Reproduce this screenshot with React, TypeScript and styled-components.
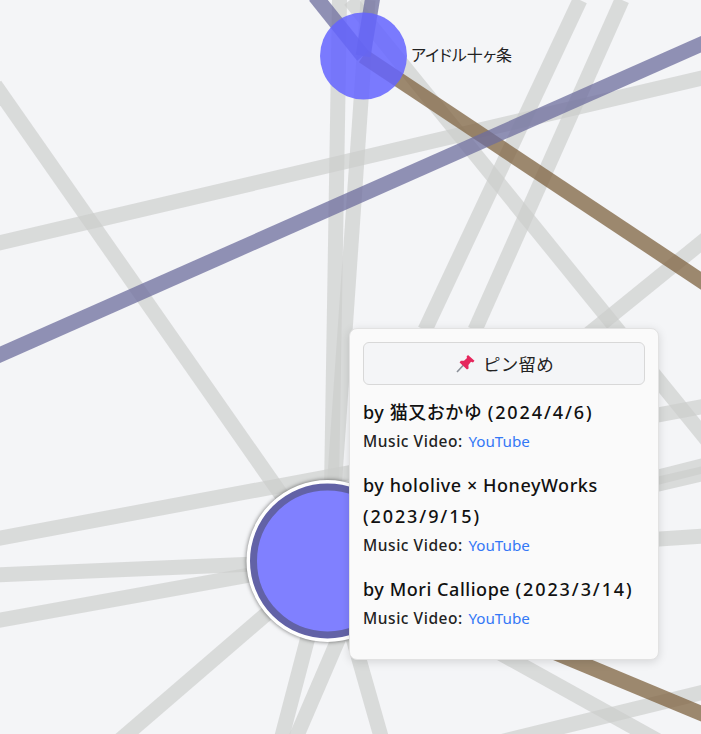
import React from "react";
import styled, { createGlobalStyle } from "styled-components";

const GlobalStyle = createGlobalStyle`
  html, body {
    margin: 0;
    padding: 0;
    background: #f4f5f7;
  }
`;

const Canvas = styled.div`
  position: relative;
  width: 701px;
  height: 734px;
  overflow: hidden;
  background: #f4f5f7;
  font-family: "Noto Sans", "Noto Sans CJK JP", sans-serif;
  color: #111;
`;

const GraphSvg = styled.svg`
  position: absolute;
  left: 0;
  top: 0;
`;

const SelectedHalo = styled.circle`
  fill: #fff;
  stroke: #fff;
  stroke-width: 3.5px;
  filter: drop-shadow(0 0 2px rgba(0, 0, 0, 0.55));
`;

const NodeLabel = styled.span`
  position: absolute;
  left: 411px;
  top: 44px;
  font-size: 16px;
  line-height: 22px;
  font-feature-settings: "palt";
  color: #222;
  white-space: nowrap;
`;

const Popup = styled.div`
  position: absolute;
  left: 349px;
  top: 328px;
  width: 310px;
  height: 332px;
  box-sizing: border-box;
  padding: 13px;
  background: #fafafa;
  border: 1px solid #e2e2e2;
  border-radius: 8px;
  box-shadow: 0 2px 10px rgba(0, 0, 0, 0.13);
  display: flex;
  flex-direction: column;
`;

const PinButton = styled.button`
  width: 100%;
  height: 43px;
  flex: none;
  display: flex;
  align-items: center;
  justify-content: center;
  gap: 8px;
  background: #f4f5f7;
  border: 1px solid #d8d8d8;
  border-radius: 6px;
  font-family: inherit;
  font-size: 17.5px;
  letter-spacing: 0.2px;
  color: #222;
  padding: 0 0 0 2px;
`;

const EntryList = styled.div`
  margin-top: 12px;
  display: flex;
  flex-direction: column;
  gap: 16px;
`;

const EntryTitle = styled.div`
  font-size: 18px;
  font-weight: 500;
  line-height: 31px;
  letter-spacing: 0.55px;
  color: #111;
`;

const EntryDate = styled.span`
  letter-spacing: 1.9px;
`;

const EntryMeta = styled.div`
  font-size: 15.5px;
  line-height: 26px;
  font-weight: 500;
  letter-spacing: 0.55px;
  color: #222;
`;

const VideoLink = styled.a`
  margin-left: 1px;
  color: #3478f6;
  font-size: 15.2px;
  font-weight: 400;
  letter-spacing: 0;
  text-decoration: none;
`;

type Edge = [number, number, number, number];

const grayEdges: Edge[] = [
  [-5, 85, 285, 500],
  [-5, 244, 706, 77],
  [580, 0, 425, 330],
  [622, 0, 475, 330],
  [350, 0, 720, 456],
  [712, 234, 580, 341],
  [339.5, 0, 331.5, 490],
  [368, 0, 334, 490],
  [-5, 539, 706, 406],
  [-5, 575, 328, 561],
  [328, 561, 706, 536],
  [-5, 621, 328, 561],
  [328, 561, 706, 465],
  [328, 561, 706, 473],
  [120, 740, 328, 561],
  [281, 740, 328, 561],
  [295, 740, 372, 561],
  [382, 740, 345, 610],
  [480, 642, 680, 753],
  [500, 742, 716, 689],
];

const brownEdges: Edge[] = [
  [363, 56, 706, 284],
  [328, 558, 712, 718],
];

const purpleEdges: Edge[] = [
  [-5, 357, 706, 42],
  [363, 56, 315, -4],
  [363, 56, 373, -4],
];

const edgeGroups: { stroke: string; opacity: number; edges: Edge[] }[] = [
  { stroke: "#cbcdcb", opacity: 0.66, edges: grayEdges },
  { stroke: "#7f6340", opacity: 0.75, edges: brownEdges },
  { stroke: "#6e6e9d", opacity: 0.75, edges: purpleEdges },
];

const PinIcon = () => (
  <svg width="19" height="19" viewBox="0 0 19 19">
    <path d="M1 18 L7.5 11" stroke="#8a8f98" strokeWidth="1.6" />
    <path
      d="M12 1 L18.5 6.8 L17 8.4 L15 7.8 L12.4 11 L12.6 14.4 L11 15.6 L3.6 8.4 L4.8 6.8 L8 6.8 L11 4 L10.6 2.4 Z"
      fill="#e5265c"
    />
  </svg>
);

const entries = [
  { by: "by 猫又おかゆ", date: "(2024/4/6)" },
  { by: "by hololive × HoneyWorks", date: "(2023/9/15)" },
  { by: "by Mori Calliope", date: "(2023/3/14)" },
];

const App = () => (
  <Canvas>
    <GlobalStyle />
    <GraphSvg width="701" height="734" viewBox="0 0 701 734">
      {edgeGroups.map((group) =>
        group.edges.map(([x1, y1, x2, y2]) => (
          <line
            key={`${x1}-${y1}-${x2}-${y2}`}
            x1={x1}
            y1={y1}
            x2={x2}
            y2={y2}
            stroke={group.stroke}
            strokeOpacity={group.opacity}
            strokeWidth="15"
          />
        ))
      )}
      <circle cx="363.5" cy="56" r="43.5" fill="#6464ff" fillOpacity="0.85" />
      <SelectedHalo cx="327.5" cy="561" r="79.25" />
      <circle cx="327.5" cy="561" r="74" fill="#8080ff" stroke="#6262a6" strokeWidth="7" />
    </GraphSvg>
    <NodeLabel>アイドル十ヶ条</NodeLabel>
    <Popup>
      <PinButton>
        <PinIcon />
        ピン留め
      </PinButton>
      <EntryList>
        {entries.map((entry) => (
          <div key={entry.by}>
            <EntryTitle>
              {entry.by} <EntryDate>{entry.date}</EntryDate>
            </EntryTitle>
            <EntryMeta>
              Music Video: <VideoLink href="#">YouTube</VideoLink>
            </EntryMeta>
          </div>
        ))}
      </EntryList>
    </Popup>
  </Canvas>
);

export default App;
